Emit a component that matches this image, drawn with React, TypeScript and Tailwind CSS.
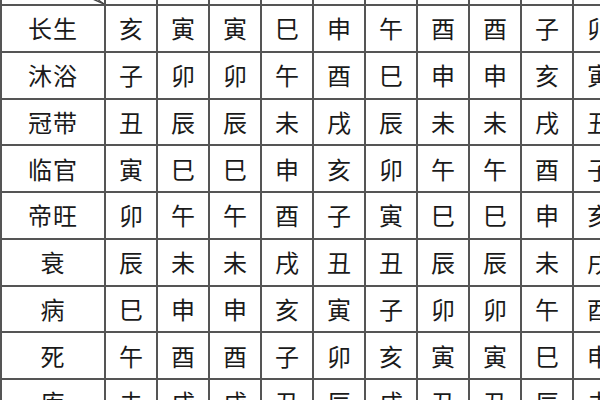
const stems = ['甲', '丙', '戊', '庚', '壬', '乙', '丁', '己', '辛', '癸'];

const rows: { name: string; cells: string[] }[] = [
  { name: '长生', cells: ['亥', '寅', '寅', '巳', '申', '午', '酉', '酉', '子', '卯'] },
  { name: '沐浴', cells: ['子', '卯', '卯', '午', '酉', '巳', '申', '申', '亥', '寅'] },
  { name: '冠带', cells: ['丑', '辰', '辰', '未', '戌', '辰', '未', '未', '戌', '丑'] },
  { name: '临官', cells: ['寅', '巳', '巳', '申', '亥', '卯', '午', '午', '酉', '子'] },
  { name: '帝旺', cells: ['卯', '午', '午', '酉', '子', '寅', '巳', '巳', '申', '亥'] },
  { name: '衰', cells: ['辰', '未', '未', '戌', '丑', '丑', '辰', '辰', '未', '戌'] },
  { name: '病', cells: ['巳', '申', '申', '亥', '寅', '子', '卯', '卯', '午', '酉'] },
  { name: '死', cells: ['午', '酉', '酉', '子', '卯', '亥', '寅', '寅', '巳', '申'] },
  { name: '库', cells: ['未', '戌', '戌', '丑', '辰', '戌', '丑', '丑', '辰', '未'] },
];

const font = { fontFamily: '"Noto Sans CJK SC", "Noto Sans", sans-serif' };

export default function App() {
  return (
    <div className="w-[600px] h-[400px] overflow-hidden bg-white text-[#1a1a1a]" style={font}>
      <div className="w-[680px] -mt-[41px] border-l-2 border-[#555]">
        {/* header row, mostly scrolled out of view */}
        <div className="flex h-[47px]">
          <div className="relative w-[104px] shrink-0 border-r-2 border-b-2 border-[#555] flex items-end pl-2 pb-[4px] text-[14px] text-[#999]">
            <svg className="absolute inset-0" width="102" height="45" viewBox="0 0 102 45">
              <line x1="0" y1="0" x2="102" y2="45" stroke="#444" strokeWidth="1.4" />
              <line x1="40" y1="0" x2="102" y2="45" stroke="#444" strokeWidth="1.2" />
            </svg>
            日干
          </div>
          {stems.map((s, i) => (
            <div key={i} className="w-[52px] shrink-0 border-r-2 border-b-2 border-[#555] flex items-start justify-center pt-1 text-[24px]">
              {s}
            </div>
          ))}
        </div>

        {rows.map(row => (
          <div key={row.name} className="flex h-[46.75px]">
            <div className="w-[104px] shrink-0 border-r-2 border-b-2 border-[#555] flex items-center justify-center text-[24px] tracking-[1px]">
              {row.name}
            </div>
            {row.cells.map((c, i) => (
              <div key={i} className="w-[52px] shrink-0 border-r-2 border-b-2 border-[#555] flex items-center justify-center text-[24px]">
                {c}
              </div>
            ))}
          </div>
        ))}
      </div>
    </div>
  );
}
